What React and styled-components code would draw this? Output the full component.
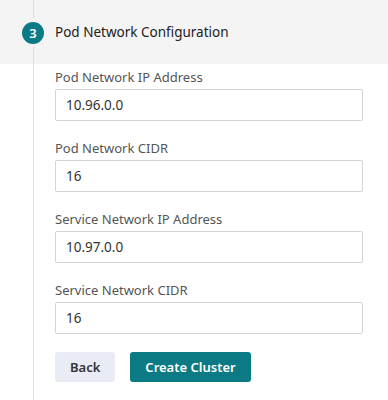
import React from 'react'
import styled, { createGlobalStyle } from 'styled-components'

const GlobalStyle = createGlobalStyle`
    body {
        margin: 0;
        background: #fff;
        font-family: 'Noto Sans', 'Open Sans', sans-serif;
        color: #333;
    }
`

const StepHeader = styled.div`
    display: flex;
    align-items: stretch;
    height: 64px;
    padding-left: 22px;
    background: #f4f4f4;
`

const Rail = styled.div`
    display: flex;
    flex-direction: column;
    align-items: center;
    width: 22px;
`

const RailLine = styled.div`
    flex: 1;
    width: 1px;
    background: #dcdcdc;
    margin: ${p => (p.$top ? '0 0 4px' : '3px 0 0')};
`

const StepNumber = styled.div`
    display: flex;
    align-items: center;
    justify-content: center;
    width: 22px;
    height: 22px;
    border-radius: 50%;
    background: #0b7a85;
    color: #fff;
    font-size: 13px;
    font-weight: 600;
`

const StepTitle = styled.div`
    display: flex;
    align-items: center;
    margin-left: 11px;
    font-size: 13.5px;
    color: #222;
`

const StepBody = styled.div`
    margin-left: 33px;
    border-left: 1px solid #e2e2e2;
    padding: 4px 0 18px 21px;
    min-height: 330px;
    display: flex;
    flex-direction: column;
    gap: 18px;
`

const Field = styled.div`
    display: flex;
    flex-direction: column;
    gap: 3px;
    width: 308px;
`

const Label = styled.label`
    font-size: 13px;
    line-height: 18px;
    color: #555;
`

const Input = styled.input`
    box-sizing: border-box;
    height: 32px;
    width: 100%;
    padding: 0 10px;
    border: 1px solid #d2d4d6;
    border-radius: 2px;
    font-family: inherit;
    font-size: 13.5px;
    color: #333;
    outline: none;
`

const Actions = styled.div`
    display: flex;
    gap: 15px;
`

const Button = styled.button`
    height: 30px;
    padding: 0 15px;
    border: none;
    border-radius: 3px;
    font-family: inherit;
    font-size: 13px;
    font-weight: 600;
    background: ${p => (p.$primary ? '#0b7a85' : '#e9ecf4')};
    color: ${p => (p.$primary ? '#fff' : '#333')};
    cursor: pointer;
`

const fields = [
    { id: 'podIp', label: 'Pod Network IP Address', value: '10.96.0.0' },
    { id: 'podCidr', label: 'Pod Network CIDR', value: '16' },
    { id: 'svcIp', label: 'Service Network IP Address', value: '10.97.0.0' },
    { id: 'svcCidr', label: 'Service Network CIDR', value: '16' },
]

export default function App() {
    return (
        <>
            <GlobalStyle />
            <StepHeader>
                <Rail>
                    <RailLine $top />
                    <StepNumber>3</StepNumber>
                    <RailLine />
                </Rail>
                <StepTitle>Pod Network Configuration</StepTitle>
            </StepHeader>
            <StepBody>
                {fields.map(f => (
                    <Field key={f.id}>
                        <Label htmlFor={f.id}>{f.label}</Label>
                        <Input id={f.id} defaultValue={f.value} />
                    </Field>
                ))}
                <Actions>
                    <Button>Back</Button>
                    <Button $primary>Create Cluster</Button>
                </Actions>
            </StepBody>
        </>
    )
}
